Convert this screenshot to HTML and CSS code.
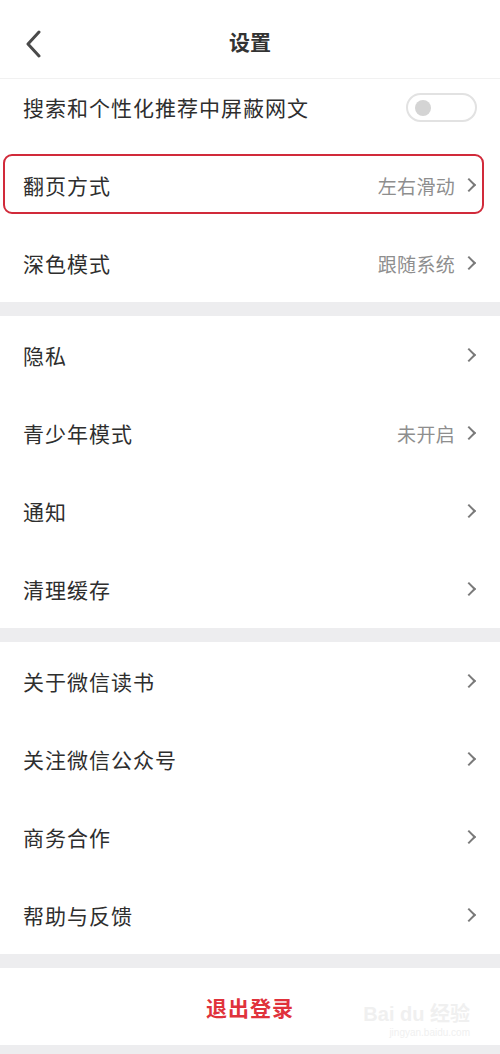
FILE: index.html
```html
<!DOCTYPE html>
<html lang="zh-CN">
<head>
  <meta charset="UTF-8">
  <meta name="viewport" content="width=device-width, initial-scale=1.0">
  <title>设置</title>
  <link rel="stylesheet" href="styles.css">
</head>
<body>

  <div class="topbar">
    <span class="back">
      <svg width="18" height="28" viewBox="0 0 18 28"><path d="M15 2 L4 14 L15 26" fill="none" stroke="#4a4a4a" stroke-width="3" stroke-linecap="round" stroke-linejoin="round"/></svg>
    </span>
    <span class="title">设置</span>
  </div>

  <div class="group">
    <div class="row first">
      <span class="label">搜索和个性化推荐中屏蔽网文</span>
      <span class="switch"><span class="knob"></span></span>
    </div>
    <div class="row marked">
      <span class="label">翻页方式</span>
      <span class="value">左右滑动</span>
      <span class="arrow"></span>
      <span class="mark"></span>
    </div>
    <div class="row">
      <span class="label">深色模式</span>
      <span class="value">跟随系统</span>
      <span class="arrow"></span>
    </div>
  </div>

  <div class="group">
    <div class="row">
      <span class="label">隐私</span>
      <span class="arrow"></span>
    </div>
    <div class="row">
      <span class="label">青少年模式</span>
      <span class="value">未开启</span>
      <span class="arrow"></span>
    </div>
    <div class="row">
      <span class="label">通知</span>
      <span class="arrow"></span>
    </div>
    <div class="row">
      <span class="label">清理缓存</span>
      <span class="arrow"></span>
    </div>
  </div>

  <div class="group">
    <div class="row">
      <span class="label">关于微信读书</span>
      <span class="arrow"></span>
    </div>
    <div class="row">
      <span class="label">关注微信公众号</span>
      <span class="arrow"></span>
    </div>
    <div class="row">
      <span class="label">商务合作</span>
      <span class="arrow"></span>
    </div>
    <div class="row">
      <span class="label">帮助与反馈</span>
      <span class="arrow"></span>
    </div>
  </div>

  <div class="group">
    <div class="logout">
      退出登录
      <span class="watermark">
        <span class="wm-brand">Bai du 经验</span>
        <span class="wm-url">jingyan.baidu.com</span>
      </span>
    </div>
  </div>

</body>
</html>
```

FILE: styles.css
```css
body {
  margin: 0;
  background-color: #ededef;
  font-family: "Noto Sans CJK SC", "Noto Sans", sans-serif;
  color: #333;
}

/* Header */
.topbar {
  display: flex;
  align-items: center;
  justify-content: center;
  position: relative;
  height: 79px;
  background-color: #fff;
  border-bottom: 1px solid #f1f1f1;
  padding-top: 3px;
  box-sizing: border-box;
}

.back {
  position: absolute;
  left: 24px;
  top: 30px;
  line-height: 0;
}

.title {
  font-size: 21px;
  font-weight: bold;
  color: #333;
}

/* Groups of rows */
.group {
  background-color: #fff;
  margin-bottom: 14px;
}

.row {
  display: flex;
  align-items: center;
  height: 78px;
  padding: 0 24px 0 23px;
  position: relative;
}

.row.first {
  height: 67px;
  padding-bottom: 11px;
  box-sizing: border-box;
}

.label {
  flex: 1;
  font-size: 21px;
  letter-spacing: 1px;
  color: #2e2e2e;
}

.value {
  font-size: 19px;
  color: #8e8e8e;
  margin-right: 9px;
  letter-spacing: 0.3px;
}

.arrow {
  width: 8px;
  height: 8px;
  border-top: 2px solid #7a7a7a;
  border-right: 2px solid #7a7a7a;
  transform: rotate(45deg);
  margin-right: 2px;
}

/* Toggle */
.switch {
  width: 60px;
  height: 25px;
  border: 2px solid #e2e2e2;
  border-radius: 16px;
  display: flex;
  align-items: center;
  padding-left: 7px;
  margin-right: -1px;
  margin-top: 1px;
}

.knob {
  width: 16px;
  height: 16px;
  border-radius: 50%;
  background-color: #d4d4d4;
}

/* Red annotation box */
.mark {
  position: absolute;
  left: 3px;
  right: 16px;
  top: 8px;
  bottom: 10px;
  border: 2.5px solid #d12a3a;
  border-radius: 9px;
}

/* Logout */
.logout {
  height: 77px;
  display: flex;
  align-items: center;
  justify-content: center;
  font-size: 21px;
  font-weight: bold;
  color: #e0323b;
  letter-spacing: 1px;
  position: relative;
}

.watermark {
  position: absolute;
  right: 30px;
  top: 30px;
  display: flex;
  flex-direction: column;
  align-items: flex-end;
  color: #f0f0f0;
  font-family: "Liberation Sans", "Noto Sans CJK SC", sans-serif;
  font-weight: normal;
  letter-spacing: 0;
}

.wm-brand {
  font-size: 20px;
  font-weight: bold;
}

.wm-url {
  font-size: 10px;
}
```
